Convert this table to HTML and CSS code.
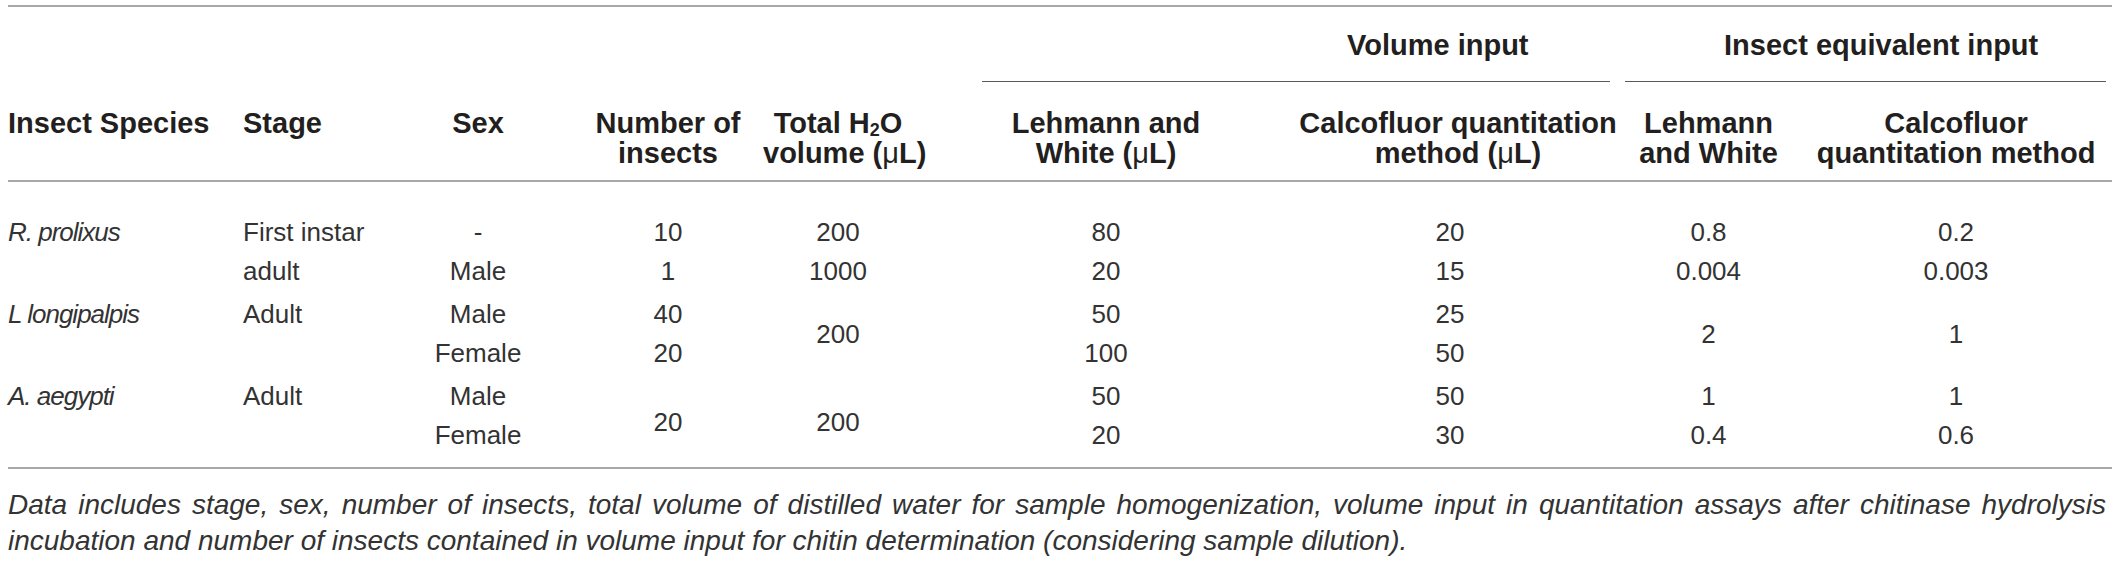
FILE: index.html
```html
<!DOCTYPE html>
<html lang="en">

<head>
  <meta charset="UTF-8">
  <meta name="viewport" content="width=device-width, initial-scale=1">
  <title>Chitin quantitation inputs</title>
  <link rel="stylesheet" href="styles.css">
</head>

<body>
  <div class="tbl_wrapper">
    <table class="tbl">
      <colgroup>
        <col class="c_species">
        <col class="c_stage">
        <col class="c_sex">
        <col class="c_number">
        <col class="c_total">
        <col class="c_lw_vol">
        <col class="c_cf_vol">
        <col class="c_lw_eq">
        <col class="c_cf_eq">
      </colgroup>
      <thead>
        <tr class="tbl_groups">
          <th colspan="5"></th>
          <th colspan="2" class="grp grp_volume"><div>Volume input</div></th>
          <th colspan="2" class="grp grp_insect"><div>Insect equivalent input</div></th>
        </tr>
        <tr class="tbl_heads">
          <th class="left">Insect Species</th>
          <th class="left">Stage</th>
          <th>Sex</th>
          <th>Number of<br>insects</th>
          <th>Total H<sub>2</sub>O<br>volume (<span class="mu">μ</span>L)</th>
          <th>Lehmann and<br>White (<span class="mu">μ</span>L)</th>
          <th>Calcofluor quantitation<br>method (<span class="mu">μ</span>L)</th>
          <th>Lehmann<br>and White</th>
          <th>Calcofluor<br>quantitation method</th>
        </tr>
      </thead>
      <tbody>
        <tr class="first">
          <td class="left sp">R. prolixus</td>
          <td class="left">First instar</td>
          <td>-</td>
          <td>10</td>
          <td>200</td>
          <td>80</td>
          <td class="cf">20</td>
          <td>0.8</td>
          <td>0.2</td>
        </tr>
        <tr>
          <td></td>
          <td class="left">adult</td>
          <td>Male</td>
          <td>1</td>
          <td>1000</td>
          <td>20</td>
          <td class="cf">15</td>
          <td>0.004</td>
          <td>0.003</td>
        </tr>
        <tr class="grp_start">
          <td class="left sp">L longipalpis</td>
          <td class="left">Adult</td>
          <td>Male</td>
          <td>40</td>
          <td class="mid" rowspan="2">200</td>
          <td>50</td>
          <td class="cf">25</td>
          <td class="mid" rowspan="2">2</td>
          <td class="mid" rowspan="2">1</td>
        </tr>
        <tr>
          <td></td>
          <td></td>
          <td>Female</td>
          <td>20</td>
          <td>100</td>
          <td class="cf">50</td>
        </tr>
        <tr class="grp_start">
          <td class="left sp">A. aegypti</td>
          <td class="left">Adult</td>
          <td>Male</td>
          <td class="mid" rowspan="2">20</td>
          <td class="mid" rowspan="2">200</td>
          <td>50</td>
          <td class="cf">50</td>
          <td>1</td>
          <td>1</td>
        </tr>
        <tr class="last">
          <td></td>
          <td></td>
          <td>Female</td>
          <td>20</td>
          <td class="cf">30</td>
          <td>0.4</td>
          <td>0.6</td>
        </tr>
      </tbody>
    </table>

    <p class="tbl_note">Data includes stage, sex, number of insects, total volume of distilled water for sample homogenization, volume input in quantitation assays after chitinase hydrolysis incubation and number of insects contained in volume input for chitin determination (considering sample dilution).</p>
  </div>
</body>

</html>
```

FILE: styles.css
```css
body {
  margin: 0;
  font-family: "Liberation Sans", Arial, sans-serif;
  color: #2b2b2b;
  background: #fff;
}

.tbl_wrapper {
  width: 2104px;
  padding: 5px 0 0 8px;
}

.tbl {
  width: 2104px;
  table-layout: fixed;
  border-collapse: collapse;
  border-top: 2px solid #a8a8a8;
  border-bottom: 2px solid #a8a8a8;
}

.c_species { width: 235px; }
.c_stage { width: 140px; }
.c_sex { width: 190px; }
.c_number { width: 190px; }
.c_total { width: 150px; }
.c_lw_vol { width: 386px; }
.c_cf_vol { width: 318px; }
.c_lw_eq { width: 183px; }
.c_cf_eq { width: 312px; }

.tbl th {
  font-size: 29px;
  font-weight: bold;
  line-height: 36px;
  color: #231f20;
  text-align: center;
  vertical-align: top;
  padding: 0;
  white-space: nowrap;
}

.tbl_groups th {
  padding-top: 20px;
}

.grp div {
  padding-bottom: 18px;
  border-bottom: 1px solid #5a5a5a;
  text-align: left;
}

.grp_volume div {
  margin: 0 7px 0 69px;
  padding-left: 365px;
}

.grp_insect div {
  margin: 0 6px 0 8px;
  padding-left: 99px;
}

.tbl_heads th {
  line-height: 30px;
  padding: 26px 0 12px;
  border-bottom: 2px solid #a8a8a8;
}

.tbl th.left,
.tbl td.left {
  text-align: left;
}

.mu {
  font-weight: normal;
}

sub {
  font-size: 18px;
  line-height: 0;
  vertical-align: -3px;
}

.tbl td {
  font-size: 26px;
  line-height: 39px;
  color: #333;
  text-align: center;
  vertical-align: top;
  padding: 0;
  white-space: nowrap;
}

.tbl td.cf {
  padding-right: 16px;
}

.tbl td.mid {
  vertical-align: middle;
}

.tbl td.sp {
  font-style: italic;
  letter-spacing: -1px;
}

.tbl tr.first td {
  padding-top: 31px;
}

.tbl tr.grp_start td {
  padding-top: 4px;
}

.tbl tr.last td {
  padding-bottom: 12px;
}

.tbl_note {
  margin: 18px 0 0;
  width: 2098px;
  font-size: 28px;
  line-height: 36px;
  font-style: italic;
  color: #333;
  text-align: justify;
}
```
